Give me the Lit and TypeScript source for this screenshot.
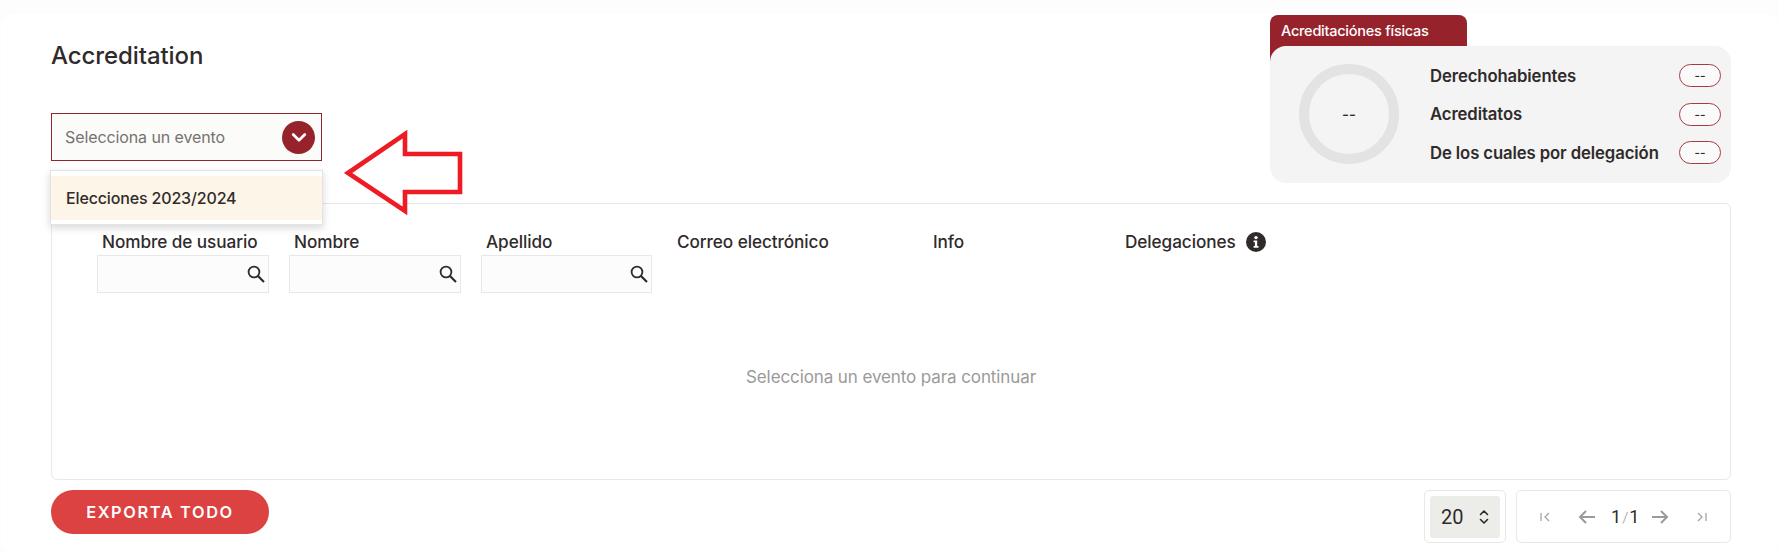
import { LitElement, html, css } from "lit";
import { customElement } from "lit/decorators.js";

const search = html`<svg class="search" viewBox="0 0 18 18" width="18" height="18" fill="none" stroke="#2c2a2a" stroke-width="1.8"><circle cx="7" cy="7" r="5.4"/><path d="M11 11l6 6" stroke-width="2.2"/></svg>`;

const headers = [
  { label: "Nombre de usuario", w: 192, iw: 172, input: true },
  { label: "Nombre", w: 192, iw: 172, input: true },
  { label: "Apellido", w: 191, iw: 171, input: true },
  { label: "Correo electrónico", w: 256, iw: 0, input: false },
  { label: "Info", w: 192, iw: 0, input: false },
];

@customElement("app-root")
export class AppRoot extends LitElement {
  static styles = css`
    :host {
      display: block;
      width: 1779px;
      height: 553px;
      background: #fdfdfd;
      font-family: "Inter", "Liberation Sans", sans-serif;
      color: #2f2b2b;
      overflow: hidden;
    }
    .card {
      position: relative;
      box-sizing: border-box;
      height: 539px;
      margin-top: 14px;
      margin-left: 1px;
      background: #fff;
      border-radius: 12px;
      padding: 0 48px 0 50px;
      display: flex;
      flex-direction: column;
    }
    .top {
      height: 189px;
      display: flex;
      justify-content: space-between;
      align-items: flex-start;
    }
    .left { display: flex; flex-direction: column; align-items: flex-start; }
    h1 {
      margin: 27px 0 0;
      font-size: 24px;
      line-height: 30px;
      font-weight: 500;
      letter-spacing: -0.08px;
    }
    .select {
      margin-top: 42px;
      box-sizing: border-box;
      width: 271px;
      height: 48px;
      border: 1px solid #96232c;
      background: #fbfbf9;
      display: flex;
      align-items: center;
      justify-content: space-between;
      padding: 0 6px 0 13px;
      font-size: 16px;
      color: #77726f;
      letter-spacing: -0.1px;
    }
    .circle {
      width: 33px;
      height: 33px;
      border-radius: 50%;
      background: #96232c;
      display: flex;
      align-items: center;
      justify-content: center;
    }
    .menu {
      position: absolute;
      left: 49px;
      top: 156px;
      width: 273px;
      height: 55px;
      box-sizing: border-box;
      background: #fff;
      border: 1px solid #e4e4e4;
      box-shadow: 0 3px 8px rgba(0, 0, 0, 0.16);
      padding: 5px 0;
      z-index: 2;
    }
    .item {
      height: 44px;
      background: #fdf6e8;
      display: flex;
      align-items: center;
      padding-left: 15px;
      font-size: 16px;
      font-weight: 500;
      letter-spacing: -0.15px;
    }
    .arrow { position: absolute; left: 340px; top: 115px; z-index: 3; }

    .panel { position: relative; width: 461px; margin-top: 1px; }
    .tab {
      box-sizing: border-box;
      width: 197px;
      height: 50px;
      background: #96232c;
      border-radius: 8px 8px 0 0;
      color: #fff;
      font-size: 14.5px;
      font-weight: 500;
      letter-spacing: -0.25px;
      padding: 7px 0 0 11px;
      line-height: 18px;
    }
    .stats {
      box-sizing: border-box;
      position: relative;
      margin-top: -19px;
      height: 137px;
      background: #f4f4f4;
      border-radius: 16px;
      display: flex;
      padding: 18px 10px 0 29px;
    }
    .ring {
      box-sizing: border-box;
      width: 100px;
      height: 100px;
      border: 10px solid #e3e3e3;
      border-radius: 50%;
      display: flex;
      align-items: center;
      justify-content: center;
      font-size: 15px;
      font-weight: 500;
    }
    .rows {
      margin-left: 31px;
      flex: 1;
      display: flex;
      flex-direction: column;
      gap: 15.5px;
    }
    .row {
      display: flex;
      justify-content: space-between;
      align-items: center;
      height: 23px;
      font-size: 16.7px;
      font-weight: 600;
      letter-spacing: -0.1px;
    }
    .pill {
      box-sizing: border-box;
      width: 42px;
      height: 23px;
      border: 1px solid #a83a42;
      border-radius: 12px;
      background: #fafafa;
      display: flex;
      align-items: center;
      justify-content: center;
      font-size: 12px;
      font-weight: 500;
    }

    .table {
      box-sizing: border-box;
      height: 277px;
      border: 1px solid #e8e8e8;
      border-radius: 6px;
      background: #fff;
      display: flex;
      flex-direction: column;
    }
    .head { display: flex; padding: 26px 0 0 45px; }
    .col { display: flex; flex-direction: column; align-items: flex-start; }
    .col span, .last {
      font-size: 17.2px;
      font-weight: 500;
      line-height: 24px;
      letter-spacing: -0.08px;
      padding-left: 5px;
    }
    .last { display: flex; align-items: center; gap: 10px; height: 24px; }
    .input {
      box-sizing: border-box;
      margin-top: 1px;
      height: 38px;
      background: #fcfcfc;
      border: 1px solid #e8e8e8;
      display: flex;
      align-items: center;
      justify-content: flex-end;
      padding-right: 3px;
    }
    .empty {
      flex: 1;
      display: flex;
      justify-content: center;
      align-items: center;
      color: #9a9a9a;
      font-size: 17px;
      letter-spacing: -0.1px;
      padding-bottom: 18px;
    }
    .foot {
      display: flex;
      align-items: flex-start;
      justify-content: space-between;
      margin-top: 10px;
    }
    .btn {
      width: 218px;
      height: 44px;
      border-radius: 22px;
      border: 0;
      background: #dc4242;
      color: #fff;
      font-family: inherit;
      font-size: 16.4px;
      font-weight: 600;
      letter-spacing: 1.6px;
    }
    .pagi { display: flex; gap: 10px; }
    .box {
      box-sizing: border-box;
      height: 53px;
      border: 1px solid #e8e8e8;
      border-radius: 5px;
      display: flex;
      align-items: center;
    }
    .size { width: 82px; padding: 0 5px; }
    .size div {
      width: 70px;
      height: 42px;
      border-radius: 3px;
      background: #ecece8;
      display: flex;
      align-items: center;
      gap: 15px;
      padding-left: 11px;
      box-sizing: border-box;
      font-family: "Roboto", sans-serif;
      font-size: 20px;
    }
    .pages {
      width: 215px;
      padding-left: 23px;
      font-family: "Roboto", sans-serif;
      font-size: 18px;
    }
    .far { margin-left: 28px; }
    .near { margin-left: 15px; }
    .frac { color: #2f2b2b; display: inline-block; width: 25px; text-align: center; white-space: nowrap; }
    .frac i { font-style: normal; color: #b5b5b5; font-size: 15px; margin: 0 1px; }
  `;

  render() {
    return html`<div class="card">
      <div class="top">
        <div class="left">
          <h1>Accreditation</h1>
          <div class="select">
            <span>Selecciona un evento</span>
            <div class="circle">
              <svg width="16" height="11" viewBox="0 0 16 11" fill="none" stroke="#fff" stroke-width="2.8" stroke-linecap="round" stroke-linejoin="round"><path d="M2.2 2.6L8 8.2l5.8-5.6"/></svg>
            </div>
          </div>
        </div>
        <div class="panel">
          <div class="tab">Acreditaciónes físicas</div>
          <div class="stats">
            <div class="ring">--</div>
            <div class="rows">
              ${["Derechohabientes", "Acreditatos", "De los cuales por delegación"].map(
                (t) => html`<div class="row"><span>${t}</span><span class="pill">--</span></div>`
              )}
            </div>
          </div>
        </div>
      </div>

      <div class="table">
        <div class="head">
          ${headers.map(
            (h) => html`<div class="col" style="width:${h.w}px">
              <span>${h.label}</span>
              ${h.input ? html`<div class="input" style="width:${h.iw}px">${search}</div>` : ""}
            </div>`
          )}
          <div class="last">
            Delegaciones
            <svg width="20" height="20" viewBox="0 0 20 20"><circle cx="10" cy="10" r="10" fill="#2f2b2b"/><circle cx="10" cy="5.6" r="1.7" fill="#fff"/><path d="M7.6 8.4h3.6v5.6h1.3v1.8H7.6V14h1.3v-3.8H7.6z" fill="#fff"/></svg>
          </div>
        </div>
        <div class="empty">Selecciona un evento para continuar</div>
      </div>

      <div class="foot">
        <button class="btn">EXPORTA TODO</button>
        <div class="pagi">
          <div class="box size">
            <div>20
              <svg width="12" height="16" viewBox="0 0 12 16" fill="none" stroke="#2f2b2b" stroke-width="1.6" stroke-linecap="round" stroke-linejoin="round"><path d="M2.5 5.5L6 2l3.5 3.5M2.5 10.5L6 14l3.5-3.5"/></svg>
            </div>
          </div>
          <div class="box pages">
            <svg width="10" height="10" viewBox="0 0 10 10" fill="none" stroke="#a5a5a5" stroke-width="1.3"><path d="M1 1v8M9 1L5 5l4 4"/></svg>
            <svg class="far" width="18" height="14" viewBox="0 0 18 14" fill="none" stroke="#9b9b9b" stroke-width="2"><path d="M17 7H2M8 1L2 7l6 6"/></svg>
            <span class="frac near">1<i>/</i>1</span>
            <svg class="near" width="18" height="14" viewBox="0 0 18 14" fill="none" stroke="#9b9b9b" stroke-width="2"><path d="M1 7h15M10 1l6 6-6 6"/></svg>
            <svg class="far" width="10" height="10" viewBox="0 0 10 10" fill="none" stroke="#a5a5a5" stroke-width="1.3"><path d="M9 1v8M1 1l4 4-4 4"/></svg>
          </div>
        </div>
      </div>

      <div class="menu"><div class="item">Elecciones 2023/2024</div></div>
      <svg class="arrow" width="130" height="90" viewBox="0 0 130 90" fill="none" stroke="#ed1c24" stroke-width="4.6" stroke-linejoin="miter">
        <path d="M7 44L64 5V25H119V63H64V82Z"/>
      </svg>
    </div>`;
  }
}
